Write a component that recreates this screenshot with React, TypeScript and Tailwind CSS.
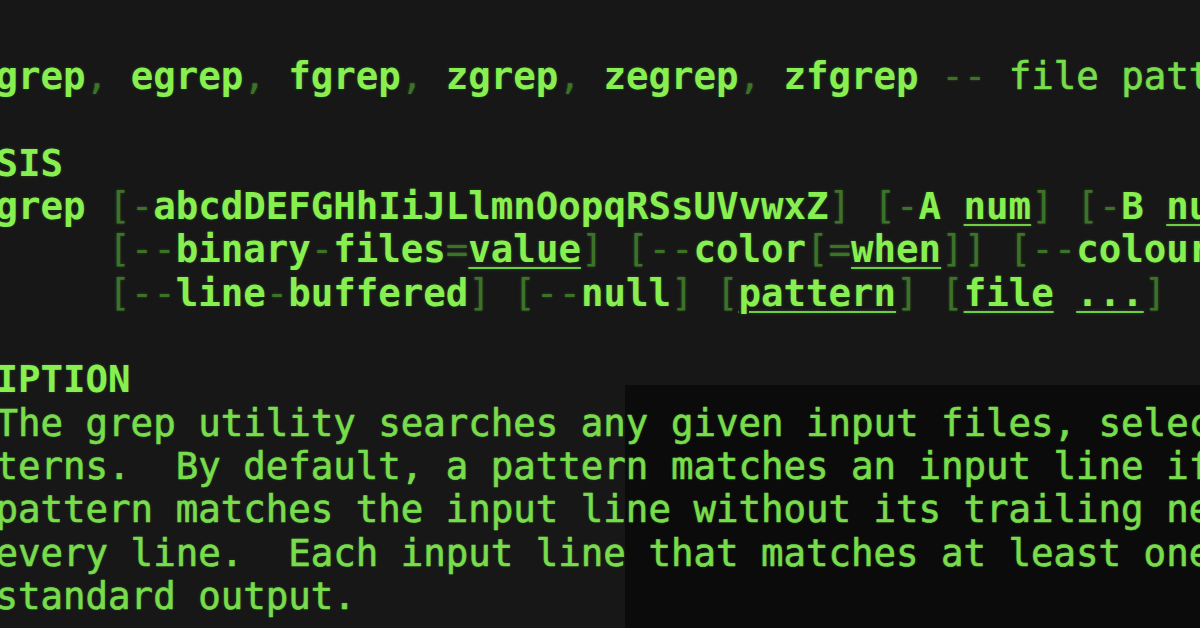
import React from "react";

const B = ({ children }: { children: React.ReactNode }) => (
  <span className="font-bold text-[#88ef50]">{children}</span>
);
const R = ({ children }: { children: React.ReactNode }) => (
  <span className="font-normal text-[#78dc4c] [-webkit-text-stroke:0.6px_#78dc4c]">{children}</span>
);
const D = ({ children }: { children: React.ReactNode }) => (
  <span className="font-normal text-[#3c7329]">{children}</span>
);
const U = ({ children }: { children: React.ReactNode }) => (
  <span className="font-bold text-[#88ef50] underline decoration-2 underline-offset-[5px] decoration-[#6fcf43]">
    {children}
  </span>
);

const Line = ({ children }: { children?: React.ReactNode }) => (
  <div className="h-[43.3px] whitespace-pre">{children ?? " "}</div>
);

export default function App() {
  return (
    <div className="w-[1200px] h-[628px] overflow-hidden bg-[#171717] bg-[linear-gradient(to_right,transparent_625px,#0b0b0b_625px)] bg-no-repeat bg-bottom bg-[length:100%_243px]">
      <div className="ml-[-117px] pt-[12px] text-[37.4px] leading-[43.3px] [font-family:'DejaVu_Sans_Mono',monospace] [text-shadow:0_0_3px_rgba(110,230,70,0.25)]">
        <Line>
          <B>NAME</B>
        </Line>
        <Line>
          {"     "}
          <B>grep</B>
          <D>,</D> <B>egrep</B>
          <D>,</D> <B>fgrep</B>
          <D>,</D> <B>zgrep</B>
          <D>,</D> <B>zegrep</B>
          <D>,</D> <B>zfgrep</B> <D>--</D> <R>file pattern searcher</R>
        </Line>
        <Line />
        <Line>
          <B>SYNOPSIS</B>
        </Line>
        <Line>
          {"     "}
          <B>grep</B> <D>[-</D>
          <B>abcdDEFGHhIiJLlmnOopqRSsUVvwxZ</B>
          <D>]</D> <D>[-</D>
          <B>A</B> <U>num</U>
          <D>]</D> <D>[-</D>
          <B>B</B> <U>num</U>
          <D>]</D> <D>[-</D>
          <B>C</B>
          <D>[</D>
          <U>num</U>
          <D>]]</D>
        </Line>
        <Line>
          {"          "}
          <D>[--</D>
          <B>binary</B>
          <D>-</D>
          <B>files</B>
          <D>=</D>
          <U>value</U>
          <D>]</D> <D>[--</D>
          <B>color</B>
          <D>[=</D>
          <U>when</U>
          <D>]]</D> <D>[--</D>
          <B>colour</B>
          <D>[=</D>
          <U>when</U>
          <D>]]</D>
        </Line>
        <Line>
          {"          "}
          <D>[--</D>
          <B>line</B>
          <D>-</D>
          <B>buffered</B>
          <D>]</D> <D>[--</D>
          <B>null</B>
          <D>]</D> <D>[</D>
          <U>pattern</U>
          <D>]</D> <D>[</D>
          <U>file</U> <U>...</U>
          <D>]</D>
        </Line>
        <Line />
        <Line>
          <B>DESCRIPTION</B>
        </Line>
        <Line>
          <R>{"     The grep utility searches any given input files, selecting lines that match one or more pat-"}</R>
        </Line>
        <Line>
          <R>{"     terns.  By default, a pattern matches an input line if the regular expression (RE) in the"}</R>
        </Line>
        <Line>
          <R>{"     pattern matches the input line without its trailing newline.  An empty expression matches"}</R>
        </Line>
        <Line>
          <R>{"     every line.  Each input line that matches at least one of the patterns is written to the"}</R>
        </Line>
        <Line>
          <R>{"     standard output."}</R>
        </Line>
      </div>
    </div>
  );
}
